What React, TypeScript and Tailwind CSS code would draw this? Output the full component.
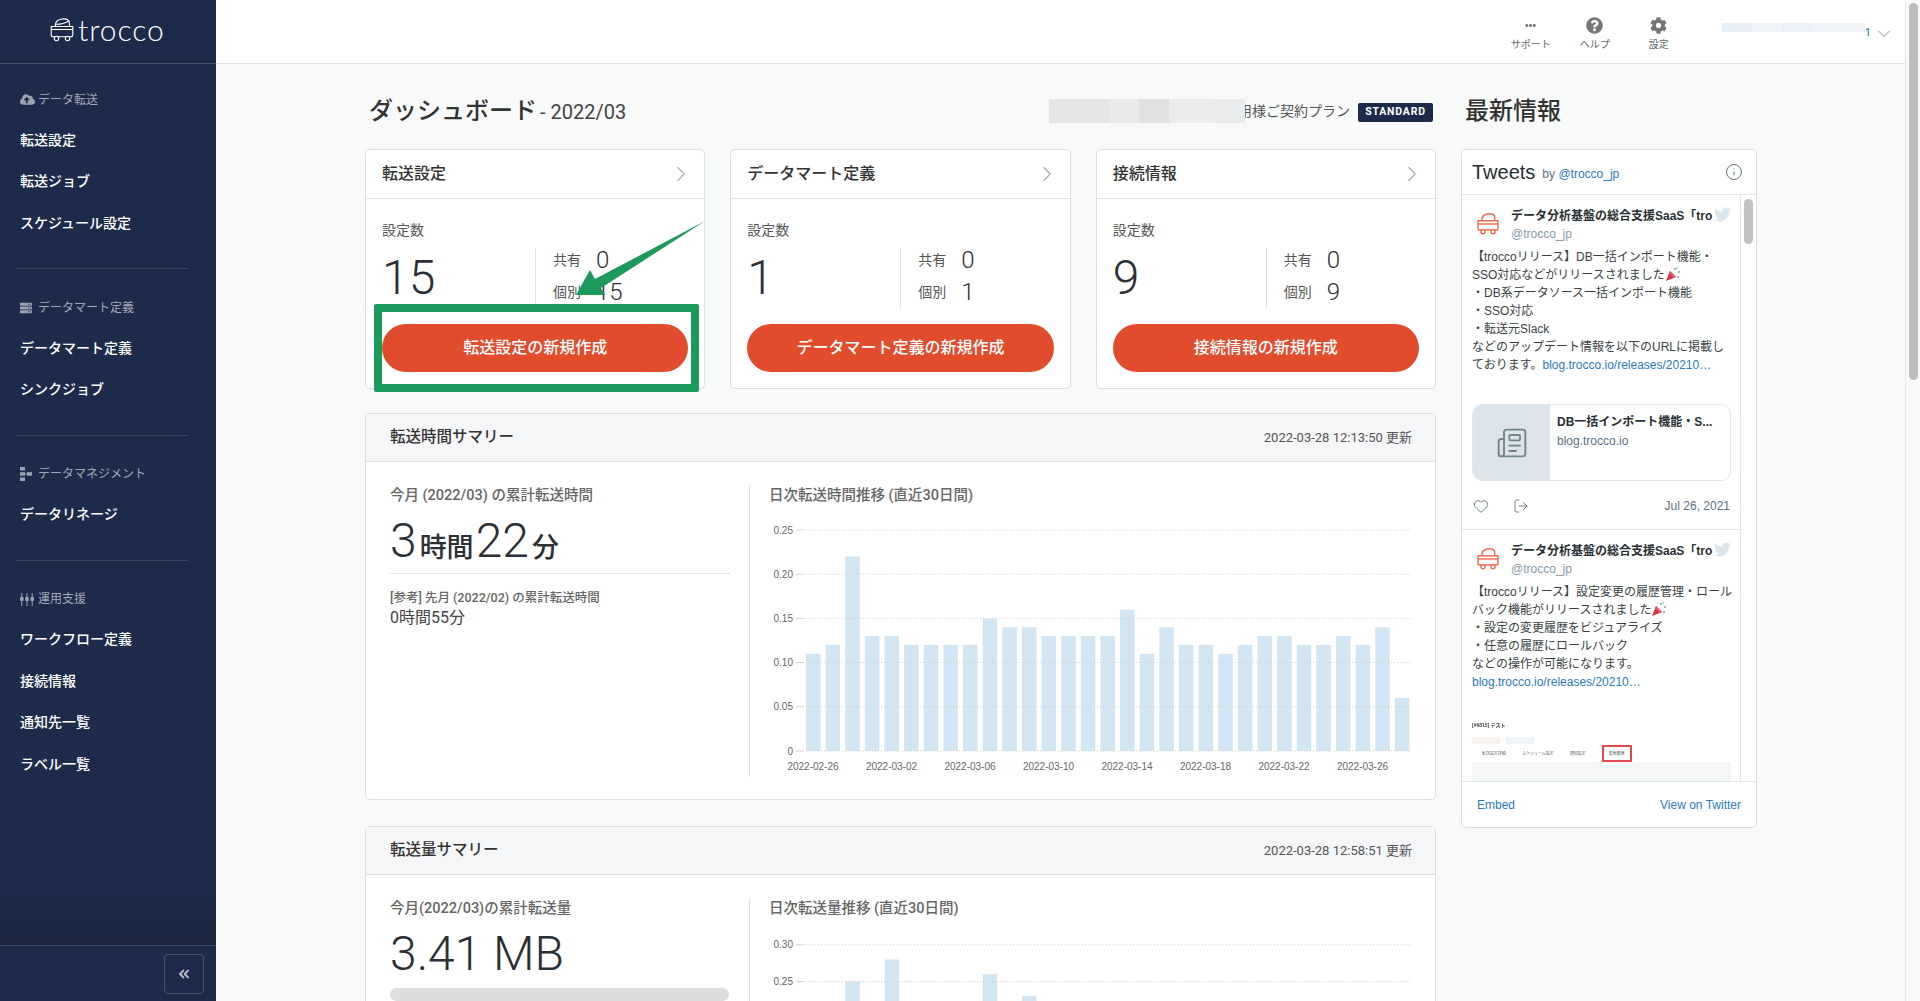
import { ChevronRight, ChevronDown, ChevronsLeft, Heart, Info, LogOut, Newspaper } from "lucide-react";
import { FaCloudUploadAlt, FaCog, FaEllipsisH, FaQuestionCircle, FaServer, FaTwitter } from "react-icons/fa";

const timeBars = [0.11, 0.12, 0.22, 0.13, 0.13, 0.12, 0.12, 0.12, 0.12, 0.15, 0.14, 0.14, 0.13, 0.13, 0.13, 0.13, 0.16, 0.11, 0.14, 0.12, 0.12, 0.11, 0.12, 0.13, 0.13, 0.12, 0.12, 0.13, 0.12, 0.14, 0.06];
const sizeBars = [0.18, 0.2, 0.25, 0.2, 0.28, 0.19, 0.2, 0.18, 0.21, 0.26, 0.2, 0.23, 0.19, 0.18, 0.2, 0.19, 0.2, 0.18, 0.21, 0.2, 0.19, 0.18, 0.2, 0.19, 0.21, 0.2, 0.18, 0.19, 0.2, 0.21, 0.1];
const dateLabels = ["2022-02-26", "2022-03-02", "2022-03-06", "2022-03-10", "2022-03-14", "2022-03-18", "2022-03-22", "2022-03-26"];

function CartLogo({ className }: { className?: string }) {
  return (
    <svg viewBox="0 0 24 25" fill="none" stroke="currentColor" strokeWidth="1.1" className={className}>
      <path d="M5.5 9.5C5 5.5 6.5 3 11 2.2c4-.7 7 .2 8 1.8l.7 5.5" />
      <path d="M5.5 7.2C9 7.6 15 6 19 4" />
      <path d="M1.2 9.5h21.6v8.2a2 2 0 0 1-2 2H3.2a2 2 0 0 1-2-2z" />
      <path d="M1.2 12.5h21.6" />
      <circle cx="6.5" cy="21.5" r="2.2" fill="#1c2b4a" />
      <circle cx="17.5" cy="21.5" r="2.2" fill="#1c2b4a" />
    </svg>
  );
}

function CartAvatar() {
  return (
    <svg viewBox="0 0 24 25" fill="none" stroke="#ec6f52" strokeWidth="1.6" className="w-[22px] h-[23px]">
      <path d="M5.5 9.5C5 5.5 6.5 3 11 2.2c4-.7 7 .2 8 1.8l.7 5.5" />
      <path d="M1.2 9.5h21.6v8.2a2 2 0 0 1-2 2H3.2a2 2 0 0 1-2-2z" />
      <path d="M1.2 13h21.6" />
      <circle cx="6.5" cy="21.5" r="2.2" fill="#fff" />
      <circle cx="17.5" cy="21.5" r="2.2" fill="#fff" />
    </svg>
  );
}

function Popper() {
  return (
    <svg viewBox="0 0 16 16" className="inline-block w-[16px] h-[16px] align-[-3px]">
      <path d="M1 15 5 5l6 6z" fill="#dd2e44" />
      <path d="M5 5l6 6-2 1-5-5z" fill="#ea596e" />
      <circle cx="10" cy="3" r="1" fill="#55acee" />
      <circle cx="14" cy="6" r="1" fill="#77b255" />
      <circle cx="7" cy="2" r="0.8" fill="#ffcc4d" />
      <circle cx="13" cy="11" r="1" fill="#aa8dd8" />
      <circle cx="12" cy="2" r="0.8" fill="#77b255" />
    </svg>
  );
}

function SitemapIcon() {
  return (
    <svg viewBox="0 0 12 14" fill="#9aa3b2" className="w-[12px] h-[14px]">
      <rect x="0" y="0" width="5" height="3.5" />
      <rect x="0" y="5.2" width="5" height="3.5" />
      <rect x="0" y="10.5" width="5" height="3.5" />
      <rect x="7" y="5.2" width="5" height="3.5" />
      <rect x="5" y="6.4" width="2" height="1" />
    </svg>
  );
}

function SlidersIcon() {
  return (
    <svg viewBox="0 0 14 13" fill="#9aa3b2" className="w-[14px] h-[13px]">
      <rect x="1.3" y="0" width="1" height="13" />
      <rect x="6.5" y="0" width="1" height="13" />
      <rect x="11.7" y="0" width="1" height="13" />
      <rect x="0" y="4" width="3.6" height="4" rx="1" />
      <rect x="5.2" y="4" width="3.6" height="4" rx="1" />
      <rect x="10.4" y="4" width="3.6" height="4" rx="1" />
    </svg>
  );
}

function NavSection({ icon, label, items, first }: { icon: React.ReactNode; label: string; items: string[]; first?: boolean }) {
  return (
    <div className={first ? "pt-[24px]" : "pt-[27px]"}>
      <div className="flex items-center h-[22px] pt-[1px] pl-[20px] text-[12px] text-[#a1a8b5]">
        <span className="w-[18px] flex items-center">{icon}</span>
        {label}
      </div>
      <ul className="mt-[9.5px]">
        {items.map((item) => (
          <li key={item} className="h-[41.5px] flex items-center pl-[20px] text-[14px] font-medium text-white">
            {item}
          </li>
        ))}
      </ul>
    </div>
  );
}

function Sidebar() {
  return (
    <aside className="w-[216px] h-full flex flex-col bg-[#1c2b4a] shrink-0">
      <div className="h-[64px] border-b border-[#47536b] flex items-center pl-[50px] gap-[4px] pb-[5px]">
        <CartLogo className="w-[24px] h-[25px] text-white" />
        <span className="text-[30px] font-['Lato',sans-serif] font-light tracking-[0.9px] text-white leading-none">trocco</span>
      </div>
      <NavSection first icon={<FaCloudUploadAlt className="text-[#9aa3b2] text-[15px]" />} label="データ転送" items={["転送設定", "転送ジョブ", "スケジュール設定"]} />
      <div className="mt-[24px] mx-[16px] w-[172px] border-t border-[#3a4763]" />
      <NavSection icon={<FaServer className="text-[#9aa3b2] text-[12px]" />} label="データマート定義" items={["データマート定義", "シンクジョブ"]} />
      <div className="mt-[24px] mx-[16px] w-[172px] border-t border-[#3a4763]" />
      <NavSection icon={<SitemapIcon />} label="データマネジメント" items={["データリネージ"]} />
      <div className="mt-[24px] mx-[16px] w-[172px] border-t border-[#3a4763]" />
      <NavSection icon={<SlidersIcon />} label="運用支援" items={["ワークフロー定義", "接続情報", "通知先一覧", "ラベル一覧"]} />
      <div className="mt-auto h-[56px] bg-linear-to-b from-transparent to-[#1a2640]" />
      <div className="h-[56px] border-t border-[#3a4763] flex justify-end pt-[8px] pr-[12px]">
        <div className="w-[40px] h-[40px] border border-[#47536b] rounded-[4px] flex items-center justify-center">
          <ChevronsLeft size={16} strokeWidth={3} className="text-[#b6bcc7]" />
        </div>
      </div>
    </aside>
  );
}

function HeaderAction({ icon, label }: { icon: React.ReactNode; label: string }) {
  return (
    <div className="w-[64px] flex flex-col items-center pt-[15px]">
      <div className="h-[20px] flex items-center text-[#757575]">{icon}</div>
      <span className="mt-[3px] text-[10px] text-[#666] leading-[14px]">{label}</span>
    </div>
  );
}

function Header() {
  return (
    <header className="h-[64px] shrink-0 bg-white border-b border-[#dedfe0] flex justify-end pr-[11px]">
      <HeaderAction icon={<FaEllipsisH className="text-[11px]" />} label="サポート" />
      <HeaderAction icon={<FaQuestionCircle className="text-[17px]" />} label="ヘルプ" />
      <HeaderAction icon={<FaCog className="text-[17px]" />} label="設定" />
      <div className="ml-[31px] flex items-start">
        <div className="mt-[23px] w-[143px] h-[9px] flex">
          <div className="w-[30px] bg-[#e9f0f8]" />
          <div className="w-[30px] bg-[#f0f4f9]" />
          <div className="w-[30px] bg-[#ebf1f8]" />
          <div className="w-[53px] bg-[#f0f4f9]" />
        </div>
        <span className="mt-[26px] text-[11px] leading-[14px] text-[#2a6fb0]">1</span>
        <ChevronDown size={20} strokeWidth={2} className="mt-[24px] ml-[3px] text-[#c3c6ca]" />
      </div>
    </header>
  );
}

function StatCard({ title, total, shared, own, action, children }: { title: string; total: number; shared: number; own: number; action: string; children?: React.ReactNode }) {
  return (
    <div className="relative h-[240px] bg-white border border-[#dcdfe1] rounded-[5px]">
      <div className="h-[49px] border-b border-[#e0e2e4] flex items-center justify-between pl-[16px] pr-[10px]">
        <span className="text-[16px] font-medium text-[#333]">{title}</span>
        <ChevronRight size={26} strokeWidth={1} className="text-[#a8adb2]" />
      </div>
      <div className="px-[16px]">
        <div className="pt-[22px] text-[14px] leading-[18px] text-[#555]">設定数</div>
        <div className="mt-[9px] h-[60px] flex">
          <div className="w-[154px] border-r border-[#e0e2e4] text-[48px] leading-[60px] font-light text-[#2c3035]">{total}</div>
          <div className="pl-[17px] flex flex-col gap-[8px]">
            <div className="h-[24px] flex items-center">
              <span className="w-[43px] text-[14px] text-[#555]">共有</span>
              <span className="text-[24px] font-light text-[#2c3035]">{shared}</span>
            </div>
            <div className="h-[24px] flex items-center">
              <span className="w-[43px] text-[14px] text-[#555]">個別</span>
              <span className="text-[24px] font-light text-[#2c3035]">{own}</span>
            </div>
          </div>
        </div>
        <div className="mt-[16px] h-[48px] rounded-full bg-[#e14c2c] flex items-center justify-center text-[16px] font-medium text-white">{action}</div>
      </div>
      {children}
    </div>
  );
}

function BarChart({ bars, ticks, top, zeroY, perUnit, height, showDates }: { bars: number[]; ticks: string[]; top: number; zeroY: number; perUnit: number; height: number; showDates?: boolean }) {
  const yFor = (v: number) => zeroY - v * perUnit;
  return (
    <svg viewBox={`769 ${top} 650 ${height}`} className="block w-[650px]" style={{ height }}>
      {bars.map((v, i) => (
        <rect key={i} x={806 + i * 19.63} y={yFor(v)} width={14.5} height={zeroY - yFor(v)} fill="#d2e5f3" />
      ))}
      {ticks.map((t) => {
        const y = yFor(Number(t));
        return (
          <g key={t}>
            <line x1={796} x2={803} y1={y} y2={y} stroke="#d5d5d5" />
            <line x1={803} x2={1411} y1={y} y2={y} stroke="#cfcfcf" strokeDasharray="1 2" />
            <text x={793} y={y + 3.5} textAnchor="end" fontSize={10} fill="#666" fontFamily="'Liberation Sans', sans-serif">{t}</text>
          </g>
        );
      })}
      {showDates &&
        dateLabels.map((d, i) => (
          <text key={d} x={813 + i * 78.5} y={770} textAnchor="middle" fontSize={10} fill="#666" fontFamily="'Liberation Sans', sans-serif">{d}</text>
        ))}
    </svg>
  );
}

function SummaryCard({ title, updated, className, children }: { title: string; updated: string; className: string; children: React.ReactNode }) {
  return (
    <section className={`bg-white border border-[#dcdfe1] rounded-[5px] overflow-hidden ${className}`}>
      <div className="h-[48px] bg-[#f5f6f8] border-b border-[#dfe1e3] flex items-center justify-between pl-[24px] pr-[23px]">
        <span className="text-[15.5px] font-medium text-[#333]">{title}</span>
        <span className="text-[13px] text-[#555]">{updated}</span>
      </div>
      <div className="flex pt-[24px] pl-[24px]">{children}</div>
    </section>
  );
}

function Tweet({ lines, children }: { lines: React.ReactNode[]; children: React.ReactNode }) {
  return (
    <div className="relative">
      <div className="flex pl-[11px] pt-[12px] h-[53px]">
        <div className="w-[38px] flex pl-[4px] pt-[5px]"><CartAvatar /></div>
        <div className="whitespace-nowrap">
          <div className="text-[12px] leading-[18px] font-bold text-[#292f33]">データ分析基盤の総合支援SaaS「tro</div>
          <div className="text-[12px] leading-[18px] text-[#8899a6]">@trocco_jp</div>
        </div>
        <FaTwitter className="absolute left-[252px] top-[11px] text-[17px] text-[#dbe5ec]" />
      </div>
      <div className="pl-[10px] text-[12px] leading-[18px] text-[#3a3f44] whitespace-nowrap">
        {lines.map((l, i) => <div key={i}>{l}</div>)}
      </div>
      {children}
    </div>
  );
}

function TweetsCard() {
  return (
    <div className="h-[679px] bg-white border border-[#dcdfe1] rounded-[5px] flex flex-col overflow-hidden font-['Liberation_Sans','Noto_Sans_CJK_JP',sans-serif]">
      <div className="h-[45px] shrink-0 border-b border-[#e1e8ed] flex items-center pl-[10px] pr-[13px]">
        <span className="text-[20px] font-light text-[#292f33]">Tweets</span>
        <span className="ml-[7px] mt-[4px] text-[12px] text-[#5b7083]">by <span className="text-[#2b7bb9]">@trocco_jp</span></span>
        <Info size={18} strokeWidth={1.3} className="ml-auto text-[#5b7083]" />
      </div>
      <div className="flex-1 min-h-0 flex">
        <div className="w-[279px] border-r border-[#e1e8ed] overflow-hidden">
          <div className="h-[335px] border-b border-[#e1e8ed]">
            <Tweet
              lines={[
                <>【troccoリリース】DB一括インポート機能・</>,
                <>SSO対応などがリリースされました<Popper /></>,
                <>・DB系データソース一括インポート機能</>,
                <>・SSO対応</>,
                <>・転送元Slack</>,
                <>などのアップデート情報を以下のURLに掲載し</>,
                <>ております。<span className="text-[#2b7bb9]">blog.trocco.io/releases/20210…</span></>,
              ]}
            >
              <div className="mt-[30px] ml-[10px] w-[259px] h-[77px] border border-[#e1e8ed] rounded-[10px] overflow-hidden flex">
                <div className="w-[77px] bg-[#dce4ea] flex items-center justify-center">
                  <Newspaper size={32} strokeWidth={1.4} className="text-[#71838f]" />
                </div>
                <div className="pl-[7px] pt-[8px]">
                  <div className="text-[12px] leading-[18px] font-bold text-[#292f33] whitespace-nowrap">DB一括インポート機能・S...</div>
                  <div className="mt-[1px] text-[12px] leading-[18px] text-[#5b7083]">blog.trocco.io</div>
                </div>
              </div>
              <div className="mt-[15px] pl-[11px] pr-[10px] flex items-center text-[#5b7083]">
                <Heart size={16} strokeWidth={1.3} />
                <LogOut size={16} strokeWidth={1.3} className="ml-[24px]" />
                <span className="ml-auto text-[12px] pt-[1px]">Jul 26, 2021</span>
              </div>
            </Tweet>
          </div>
          <Tweet
            lines={[
              <>【troccoリリース】設定変更の履歴管理・ロール</>,
              <>バック機能がリリースされました<Popper /></>,
              <>・設定の変更履歴をビジュアライズ</>,
              <>・任意の履歴にロールバック</>,
              <>などの操作が可能になります。</>,
              <span className="text-[#2b7bb9]">blog.trocco.io/releases/20210…</span>,
            ]}
          >
            <div className="mt-[31px] ml-[10px] w-[259px] h-[70px] overflow-hidden text-[5px] leading-[7px] text-[#666] blur-[0.5px]">
              <div className="font-bold text-[#444]">[#6815] テスト</div>
              <div className="mt-[8px] flex gap-[6px] items-center text-[4px]">
                <span className="w-[28px] h-[7px] bg-[#f8f0ee]" />
                <span className="w-[28px] h-[7px] bg-[#eef3fa]" />
              </div>
              <div className="mt-[1px] flex gap-[16px] items-center pl-[10px] h-[17px] text-[4px]">
                <span>転送設定詳細</span>
                <span>スケジュール設定</span>
                <span>通知設定</span>
                <span className="border-2 border-[#e5484d] px-[5px] h-[17px] flex items-center text-[#555]">変更履歴</span>
              </div>
              <div className="h-[30px] bg-[#f5f6f7]" />
            </div>
          </Tweet>
        </div>
        <div className="flex-1 pt-[4px] pl-[3px]">
          <div className="w-[9px] h-[45px] rounded-full bg-[#c1c1c1]" />
        </div>
      </div>
      <div className="h-[46px] shrink-0 border-t border-[#e1e8ed] flex items-center justify-between pl-[15px] pr-[15px] text-[12px] text-[#2b7bb9]">
        <span>Embed</span>
        <span>View on Twitter</span>
      </div>
    </div>
  );
}

export default function App() {
  return (
    <div className="h-[1001px] w-[1920px] flex overflow-hidden bg-[#f8f9f9] font-['Roboto','Noto_Sans_CJK_JP',sans-serif]">
      <Sidebar />
      <div className="w-[1689px] flex flex-col">
        <Header />
        <main className="flex-1 min-h-0 overflow-hidden flex gap-[25px] pl-[149px] pt-[30px]">
          <div className="w-[1071px] shrink-0">
            <div className="h-[32px] pt-[2px] flex items-center justify-between mb-[23px]">
              <h1 className="pl-[4px] text-[24px] font-medium text-[#333] flex items-baseline">
                ダッシュボード
                <span className="ml-[3px] text-[20px] font-normal text-[#444]">- 2022/03</span>
              </h1>
              <div className="flex items-center pr-[3px]">
                <div className="relative z-10 -mr-[7px] flex h-[24px] w-[196px]">
                  <div className="w-[60px] bg-[#e4e5e5]" />
                  <div className="w-[30px] bg-[#e9eaea]" />
                  <div className="w-[30px] bg-[#dfe0e0]" />
                  <div className="w-[40px] bg-[#ebecec]" />
                  <div className="w-[36px] bg-[#eaebeb]" />
                </div>
                <span className="text-[14px] text-[#555]">用様ご契約プラン</span>
                <span className="ml-[8px] mt-[2px] w-[75px] h-[19px] rounded-[2px] bg-[#1c2b4a] flex items-center justify-center text-[10.5px] font-bold tracking-[0.8px] text-white">STANDARD</span>
              </div>
            </div>
            <div className="grid grid-cols-3 gap-[25px]">
              <StatCard title="転送設定" total={15} shared={0} own={15} action="転送設定の新規作成">
                <div className="absolute left-[8px] top-[154px] w-[325px] h-[88px] border-[8px] border-[#1b9a5b] rounded-[2px]" />
                <svg viewBox="570 215 140 90" className="absolute left-[204px] top-[65px] w-[140px] h-[90px]">
                  <polygon points="705,221 595,279 590,270 576,295 605,295 601,288" fill="#1b9a5b" />
                </svg>
              </StatCard>
              <StatCard title="データマート定義" total={1} shared={0} own={1} action="データマート定義の新規作成" />
              <StatCard title="接続情報" total={9} shared={0} own={9} action="接続情報の新規作成" />
            </div>
            <SummaryCard title="転送時間サマリー" updated="2022-03-28 12:13:50 更新" className="mt-[24px] h-[387px]">
              <div className="w-[339px]">
                <div className="text-[14.5px] leading-[20px] font-medium text-[#666]">今月 (2022/03) の累計転送時間</div>
                <div className="mt-[7px] h-[56px] flex items-baseline text-[#2c3035]">
                  <span className="text-[48px] leading-[56px] font-light">3</span>
                  <span className="ml-[3px] text-[27px] font-medium">時間</span>
                  <span className="ml-[2px] text-[48px] leading-[56px] font-light">22</span>
                  <span className="ml-[3px] text-[27px] font-medium">分</span>
                </div>
                <div className="mt-[4px] border-b border-dotted border-[#c8c8c8]" />
                <div className="mt-[15px] text-[12.5px] leading-[18px] font-medium text-[#666]">[参考] 先月 (2022/02) の累計転送時間</div>
                <div className="text-[16px] leading-[22px] text-[#444]">0時間55分</div>
              </div>
              <div className="ml-[20px] h-[291px] border-l border-[#dcdfe1]" />
              <div className="ml-[19px]">
                <div className="text-[14.5px] leading-[20px] font-medium text-[#666]">日次転送時間推移 (直近30日間)</div>
                <BarChart bars={timeBars} ticks={["0", "0.05", "0.10", "0.15", "0.20", "0.25"]} top={506} zeroY={751} perUnit={884} height={271} showDates />
              </div>
            </SummaryCard>
            <SummaryCard title="転送量サマリー" updated="2022-03-28 12:58:51 更新" className="mt-[26px] h-[400px]">
              <div className="w-[339px]">
                <div className="text-[14.5px] leading-[20px] font-medium text-[#666]">今月(2022/03)の累計転送量</div>
                <div className="mt-[7px] h-[56px] text-[48px] leading-[56px] font-light text-[#2c3035]">3.41 MB</div>
                <div className="mt-[6px] h-[13px] rounded-full bg-[#dcdddf]" />
              </div>
              <div className="ml-[20px] h-[291px] border-l border-[#dcdfe1]" />
              <div className="ml-[19px]">
                <div className="text-[14.5px] leading-[20px] font-medium text-[#666]">日次転送量推移 (直近30日間)</div>
                <BarChart bars={sizeBars} ticks={["0.25", "0.30"]} top={918} zeroY={1164} perUnit={734} height={271} />
              </div>
            </SummaryCard>
          </div>
          <div className="w-[296px] shrink-0">
            <div className="h-[32px] pt-[2px] flex items-center mb-[23px] pl-[4px] text-[24px] font-medium text-[#333]">最新情報</div>
            <TweetsCard />
          </div>
        </main>
      </div>
      <div className="w-[15px] border-l border-[#e6e6e6] bg-[#fafafa] pt-[3px] pl-[3px]">
        <div className="w-[9px] h-[377px] rounded-full bg-[#bdbdbd]" />
      </div>
    </div>
  );
}
